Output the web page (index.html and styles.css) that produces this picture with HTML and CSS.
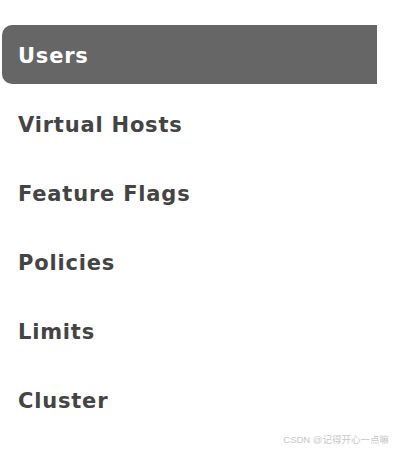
FILE: index.html
```html
<!DOCTYPE html>
<html lang="en">
<head>
    <meta charset="UTF-8">
    <title>Admin</title>
    <link rel="stylesheet" href="styles.css">
</head>
<body>
    <ul class="menu">
        <li><a href="#users" class="selected">Users</a></li>
        <li><a href="#vhosts">Virtual Hosts</a></li>
        <li><a href="#feature-flags">Feature Flags</a></li>
        <li><a href="#policies">Policies</a></li>
        <li><a href="#limits">Limits</a></li>
        <li><a href="#cluster">Cluster</a></li>
    </ul>
    <div class="watermark">CSDN @记得开心一点嘛</div>
</body>
</html>
```

FILE: styles.css
```css
* {
    margin: 0;
    padding: 0;
    box-sizing: border-box;
}

body {
    background: #fff;
    font-family: "DejaVu Sans", Verdana, sans-serif;
    width: 394px;
    height: 450px;
    overflow: hidden;
}

.menu {
    list-style: none;
    margin: 25px 0 0 2px;
    width: 375px;
    display: flex;
    flex-direction: column;
    gap: 10px;
}

.menu a {
    display: flex;
    align-items: center;
    height: 59px;
    padding: 2px 0 0 16px;
    font-size: 21px;
    font-weight: bold;
    letter-spacing: 0.8px;
    color: #444;
    text-decoration: none;
    border-radius: 10px 0 0 10px;
}

.menu a.selected {
    background: #666;
    color: #fff;
}

.watermark {
    position: absolute;
    right: 5px;
    top: 432px;
    font-family: "Liberation Sans", "Noto Sans CJK SC", sans-serif;
    font-size: 9.5px;
    color: #c8c8c8;
}
```
